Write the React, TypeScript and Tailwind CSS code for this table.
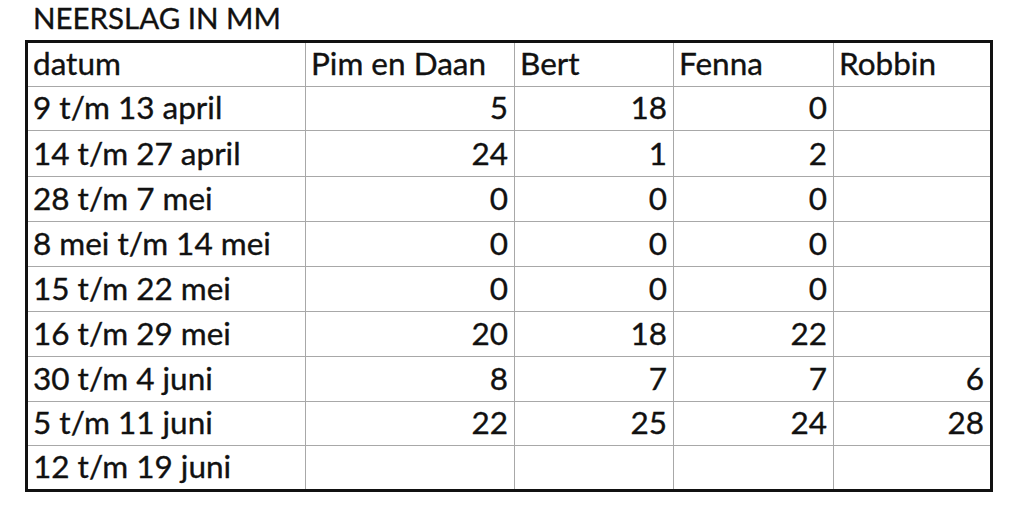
const cols = [278, 209, 159, 160, 156];

const header = ["datum", "Pim en Daan", "Bert", "Fenna", "Robbin"];

const rows: { datum: string; values: (number | null)[]; h: number }[] = [
  { datum: "9 t/m 13 april", values: [5, 18, 0, null], h: 44 },
  { datum: "14 t/m 27 april", values: [24, 1, 2, null], h: 46 },
  { datum: "28 t/m 7 mei", values: [0, 0, 0, null], h: 45 },
  { datum: "8 mei t/m 14 mei", values: [0, 0, 0, null], h: 45 },
  { datum: "15 t/m 22 mei", values: [0, 0, 0, null], h: 45 },
  { datum: "16 t/m 29 mei", values: [20, 18, 22, null], h: 45 },
  { datum: "30 t/m 4 juni", values: [8, 7, 7, 6], h: 45 },
  { datum: "5 t/m 11 juni", values: [22, 25, 24, 28], h: 44 },
  { datum: "12 t/m 19 juni", values: [null, null, null, null], h: 43 },
];

function Cell({ i, children, right }: { i: number; children?: React.ReactNode; right?: boolean }) {
  const last = i === cols.length - 1;
  return (
    <div
      style={{ width: cols[i] }}
      className={`flex h-full items-end pb-[7px] ${right ? "justify-end pr-[6px]" : "pl-[5px]"} ${last ? "" : "border-r border-[#a8a8a8]"}`}
    >
      {children}
    </div>
  );
}

export default function App() {
  return (
    <div className="min-h-screen bg-white text-[#111] font-['Lato',sans-serif] [-webkit-text-stroke:0.35px_#111]">
      <div className="h-[40px] pl-[33px] text-[29.5px] leading-[36px]">NEERSLAG IN MM</div>
      <div className="ml-[25px] w-[968px] border-[3px] border-[#111] text-[31.5px] leading-none">
        <div className="flex h-[44px] border-b border-[#a8a8a8]">
          {header.map((h, i) => (
            <Cell key={h} i={i}>
              {h}
            </Cell>
          ))}
        </div>
        {rows.map((r, ri) => (
          <div
            key={r.datum}
            style={{ height: r.h }}
            className={`flex ${ri === rows.length - 1 ? "" : "border-b border-[#a8a8a8]"}`}
          >
            <Cell i={0}>{r.datum}</Cell>
            {r.values.map((v, vi) => (
              <Cell key={vi} i={vi + 1} right>
                {v}
              </Cell>
            ))}
          </div>
        ))}
      </div>
    </div>
  );
}
